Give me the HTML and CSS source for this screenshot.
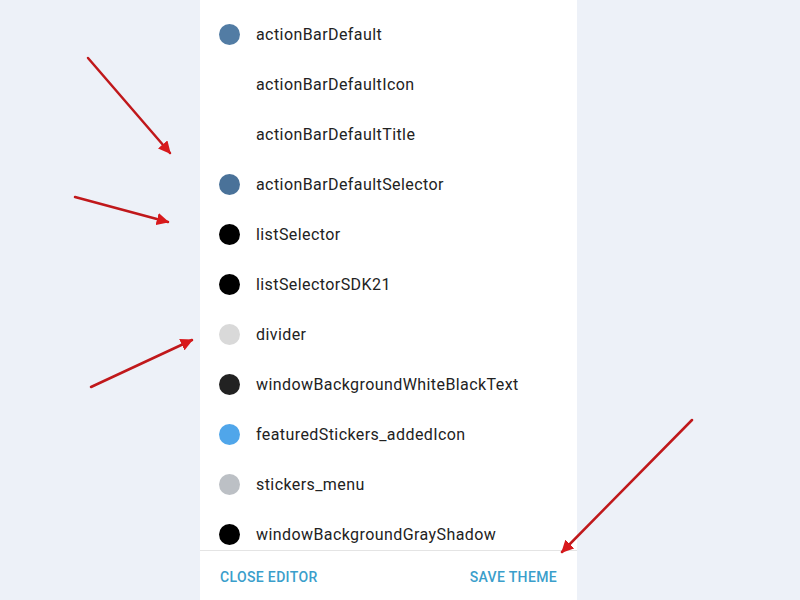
FILE: index.html
```html
<!DOCTYPE html>
<html lang="en">
<head>
    <meta charset="UTF-8">
    <meta name="viewport" content="width=device-width, initial-scale=1.0">
    <title>Theme Editor</title>
    <link rel="stylesheet" href="styles.css">
</head>
<body>

    <div class="page">
        <div class="panel">
            <ul class="color-list">
                <li class="row"><span class="dot" style="background:#527ca4"></span>actionBarDefault</li>
                <li class="row"><span class="dot empty"></span>actionBarDefaultIcon</li>
                <li class="row"><span class="dot empty"></span>actionBarDefaultTitle</li>
                <li class="row"><span class="dot" style="background:#4a7299"></span>actionBarDefaultSelector</li>
                <li class="row"><span class="dot" style="background:#000"></span>listSelector</li>
                <li class="row"><span class="dot" style="background:#000"></span>listSelectorSDK21</li>
                <li class="row"><span class="dot" style="background:#d9d9d9"></span>divider</li>
                <li class="row"><span class="dot" style="background:#222"></span>windowBackgroundWhiteBlackText</li>
                <li class="row"><span class="dot" style="background:#50a6ea"></span>featuredStickers_addedIcon</li>
                <li class="row"><span class="dot" style="background:#bcc0c5"></span>stickers_menu</li>
                <li class="row"><span class="dot" style="background:#000"></span>windowBackgroundGrayShadow</li>
            </ul>
            <div class="footer">
                <button class="btn">CLOSE EDITOR</button>
                <button class="btn">SAVE THEME</button>
            </div>
        </div>
    </div>

    <!-- red annotation arrows -->
    <svg class="arrows" width="800" height="600" viewBox="0 0 800 600">
        <defs>
            <marker id="head" viewBox="0 0 10 10" refX="9" refY="5" markerWidth="5" markerHeight="5" orient="auto">
                <path d="M0 0 L10 5 L0 10 z" fill="#d8191c"/>
            </marker>
        </defs>
        <g stroke="#c0181b" stroke-width="2.5" stroke-linecap="round" marker-end="url(#head)">
            <line x1="88" y1="58" x2="170" y2="153"/>
            <line x1="75" y1="197" x2="168" y2="222"/>
            <line x1="91" y1="387" x2="192" y2="340"/>
            <line x1="692" y1="420" x2="562" y2="552"/>
        </g>
    </svg>

</body>
</html>
```

FILE: styles.css
```css
body {
    margin: 0;
    background-color: #edf1f8;
    font-family: Roboto, "Liberation Sans", sans-serif;
}
.page {
    display: flex;
    justify-content: center;
    height: 600px;
    overflow: hidden;
}
.panel {
    width: 377px;
    margin-left: -23px;
    background-color: #fff;
    display: flex;
    flex-direction: column;
}
.color-list {
    list-style: none;
    margin: 0;
    padding: 9px 0 0 0;
    height: 541px;
    overflow: hidden;
    border-bottom: 1px solid #e4e4e4;
}
.row {
    height: 50px;
    display: flex;
    align-items: center;
    padding-left: 19px;
    font-size: 16px;
    letter-spacing: 0.42px;
    color: #222;
}
.dot {
    width: 21px;
    height: 21px;
    border-radius: 50%;
    margin-right: 16px;
    flex-shrink: 0;
}
.footer {
    flex: 1;
    display: flex;
    justify-content: space-between;
    align-items: center;
    padding: 2px 20px 0 20px;
}
.btn {
    background: none;
    border: none;
    padding: 0;
    font-family: Roboto, "Liberation Sans", sans-serif;
    font-size: 14px;
    font-weight: 500;
    letter-spacing: 0.35px;
    color: #3a9ecb;
    cursor: pointer;
}
.arrows {
    position: absolute;
    top: 0;
    left: 0;
    pointer-events: none;
}
```
